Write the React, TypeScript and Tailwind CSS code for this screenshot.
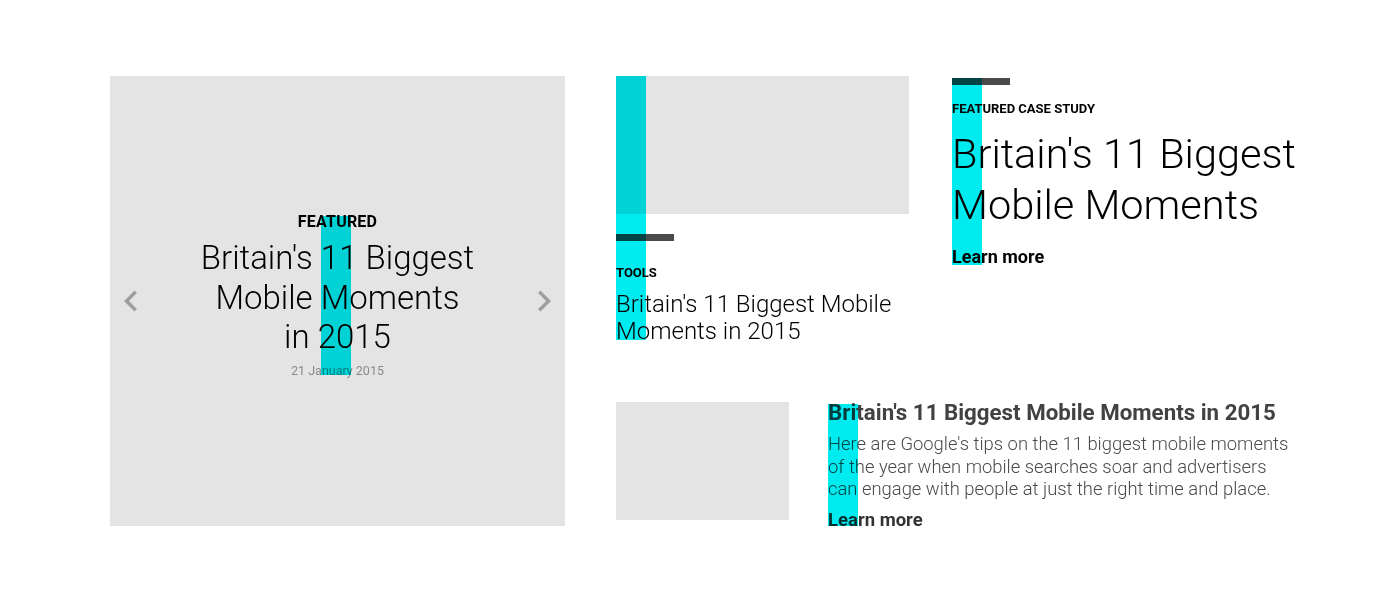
const font = { fontFamily: 'Roboto, "Liberation Sans", sans-serif' };

function Chevron({ dir }: { dir: 'left' | 'right' }) {
  const d =
    dir === 'left'
      ? 'M15.41 7.41L14 6l-6 6 6 6 1.41-1.41L10.83 12z'
      : 'M10 6L8.59 7.41 13.17 12l-4.58 4.59L10 18l6-6z';
  return (
    <svg viewBox="0 0 24 24" className="w-[42px] h-[42px]" fill="#9e9e9e">
      <path d={d} />
    </svg>
  );
}

function Marker({ className }: { className: string }) {
  return <div className={`absolute w-[30px] bg-[#00ebf0] mix-blend-multiply pointer-events-none ${className}`} />;
}

function FeaturedSlide() {
  return (
    <div className="relative w-[455px] h-[450px] shrink-0 bg-[#e4e4e4] flex flex-col items-center justify-center pb-[10px] text-center">
      <div className="text-[16px] leading-[18px] font-bold text-black tracking-[0.2px]">FEATURED</div>
      <h2 className="mt-[7px] text-[33px] leading-[39.5px] font-light text-black">
        Britain's 11 Biggest
        <br />
        Mobile Moments
        <br />
        in 2015
      </h2>
      <div className="mt-[6px] text-[12.5px] leading-[16px] text-[#8a8a8a]">21 January 2015</div>
      <button className="absolute left-0 top-1/2 -translate-y-1/2">
        <Chevron dir="left" />
      </button>
      <button className="absolute right-0 top-1/2 -translate-y-1/2">
        <Chevron dir="right" />
      </button>
      <Marker className="left-[211px] top-[140px] h-[159px]" />
    </div>
  );
}

function ToolsCard() {
  return (
    <div className="relative w-[293px] shrink-0">
      <div className="h-[138px] bg-[#e4e4e4]" />
      <div className="mt-[20px] w-[58px] h-[7px] bg-[#4a4a4a]" />
      <div className="mt-[25px] text-[13px] leading-[14px] font-bold text-black">TOOLS</div>
      <h3 className="mt-[11px] text-[24px] leading-[27px] font-light text-black">
        Britain's 11 Biggest Mobile Moments in 2015
      </h3>
      <Marker className="left-0 top-0 h-[264px]" />
    </div>
  );
}

function CaseStudy() {
  return (
    <div className="relative w-[360px] pt-[2px]">
      <div className="w-[58px] h-[7px] bg-[#4a4a4a]" />
      <div className="mt-[16px] text-[13px] leading-[16px] font-bold text-black">FEATURED CASE STUDY</div>
      <h2 className="mt-[11px] text-[41.5px] leading-[51px] font-light text-black">
        Britain's 11 Biggest
        <br />
        Mobile Moments
      </h2>
      <a className="block mt-[16px] text-[18px] leading-[22px] font-bold text-black">Learn more</a>
      <Marker className="left-0 top-[2px] h-[187px]" />
    </div>
  );
}

function ArticleRow() {
  return (
    <div className="flex gap-[39px] mt-[54px]">
      <div className="mt-[3px] w-[173px] h-[118px] shrink-0 bg-[#e4e4e4]" />
      <div className="relative w-[465px] pt-[1px]">
        <h3 className="text-[22.3px] leading-[24px] font-bold text-[#424242] whitespace-nowrap">
          Britain's 11 Biggest Mobile Moments in 2015
        </h3>
        <p className="mt-[9px] text-[18.4px] leading-[22.5px] font-light text-[#4a4a4a]">
          Here are Google's tips on the 11 biggest mobile moments of the year when mobile searches soar and
          advertisers can engage with people at just the right time and place.
        </p>
        <a className="block mt-[8px] text-[18.5px] leading-[22px] font-bold text-[#333]">Learn more</a>
        <Marker className="left-0 top-[5px] h-[122px]" />
      </div>
    </div>
  );
}

export default function App() {
  return (
    <div className="w-[1400px] h-[600px] bg-white pt-[76px] pl-[110px]" style={font}>
      <div className="flex gap-[51px]">
        <FeaturedSlide />
        <div className="flex flex-col">
          <div className="flex gap-[43px]">
            <ToolsCard />
            <CaseStudy />
          </div>
          <ArticleRow />
        </div>
      </div>
    </div>
  );
}
